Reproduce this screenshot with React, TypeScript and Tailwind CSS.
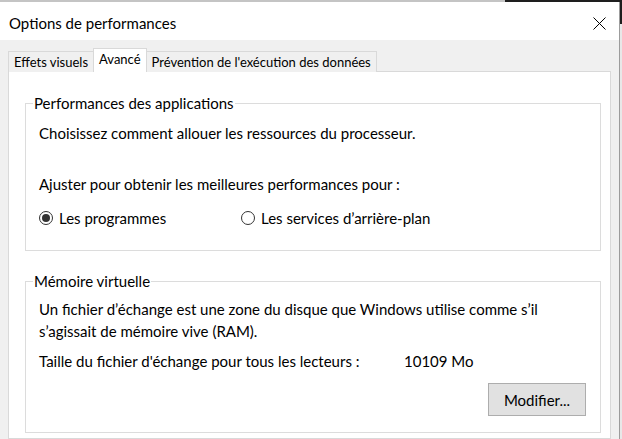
import { useState } from "react"

function Radio({ checked, label, onClick }: { checked: boolean; label: string; onClick: () => void }) {
  return (
    <button type="button" onClick={onClick} className="flex items-center gap-[6px] text-left">
      <span className="w-[14px] h-[14px] rounded-full border border-[#333333] bg-white flex items-center justify-center">
        {checked && <span className="w-[8px] h-[8px] rounded-full bg-[#333333]" />}
      </span>
      <span>{label}</span>
    </button>
  )
}

export default function App() {
  const [mode, setMode] = useState<"prog" | "bg">("prog")
  const tabs = ["Effets visuels", "Avancé", "Prévention de l'exécution des données"]

  return (
    <div className="w-[622px] h-[439px] overflow-hidden flex flex-col bg-[#e6e6e6] text-black font-['Lato',sans-serif]">
      {/* background strip behind window */}
      <div className="h-[2px] flex shrink-0">
        <div className="w-[505px] bg-[#c4c4c4]" />
        <div className="flex-1 bg-[#1e1e1e]" />
      </div>

      <div className="flex flex-1 min-h-0">
        <div className="w-[620px] flex flex-col border-r border-[#9c9c9c] bg-[#f0f0f0]">
          {/* Title bar */}
          <div className="h-[38px] shrink-0 bg-white flex items-center justify-between pl-[9px] pr-[13px]">
            <span className="text-[15px] leading-[20px] pt-[3px]">Options de performances</span>
            <svg width="13" height="13" viewBox="0 0 13 13" className="mt-[5px]">
              <path d="M0.5 0.5 L12.5 12.5 M12.5 0.5 L0.5 12.5" stroke="#000" strokeWidth="1" fill="none" />
            </svg>
          </div>

          {/* Body */}
          <div className="flex-1 pt-[8px] pl-[8px] flex flex-col min-h-0">
            <div className="flex items-end h-[24px] text-[13px] relative z-10 -mb-px">
              {tabs.map((t, i) =>
                i === 1 ? (
                  <div key={t} className="h-[24px] px-[5px] bg-white border border-b-0 border-[#d9d9d9] flex items-start pt-[1px] leading-[18px]">
                    {t}
                  </div>
                ) : (
                  <div key={t} className="h-[21px] px-[5px] bg-[#f0f0f0] border border-b-0 border-[#d9d9d9] flex items-center leading-[18px] -mx-px first:ml-0">
                    {t}
                  </div>
                )
              )}
            </div>

            <div className="w-[603px] flex-1 bg-white border border-[#d9d9d9] pl-[16px] pt-[21px] text-[15px] leading-[20px]">
              <fieldset className="w-[576px] border border-[#dcdcdc]">
                <legend className="ml-[7px] px-[1px]">Performances des applications</legend>
                <div className="pl-[13px] pb-[22px]">
                  <p className="mt-[10px]">Choisissez comment allouer les ressources du processeur.</p>
                  <p className="mt-[31px]">Ajuster pour obtenir les meilleures performances pour :</p>
                  <div className="mt-[14px] flex">
                    <div className="w-[202px]">
                      <Radio checked={mode === "prog"} label="Les programmes" onClick={() => setMode("prog")} />
                    </div>
                    <Radio checked={mode === "bg"} label="Les services d’arrière-plan" onClick={() => setMode("bg")} />
                  </div>
                </div>
              </fieldset>

              <fieldset className="w-[576px] mt-[20px] border border-[#dcdcdc]">
                <legend className="ml-[7px] px-[1px]">Mémoire virtuelle</legend>
                <div className="pl-[13px] pr-[14px] pb-[16px]">
                  <p className="mt-[7px] leading-[22px]">
                    Un fichier d’échange est une zone du disque que Windows utilise comme s’il
                    <br />
                    s’agissait de mémoire vive (RAM).
                  </p>
                  <div className="mt-[9px] flex">
                    <span className="w-[365px]">Taille du fichier d'échange pour tous les lecteurs :</span>
                    <span>10109 Mo</span>
                  </div>
                  <div className="mt-[12px] flex justify-end">
                    <button type="button" className="w-[98px] h-[33px] bg-[#e1e1e1] border border-[#adadad] text-[15px]">
                      Modifier...
                    </button>
                  </div>
                </div>
              </fieldset>
            </div>
          </div>
        </div>

        <div className="flex-1 flex flex-col">
          <div className="h-[22px] bg-[#1e1e1e]" />
          <div className="flex-1 bg-[#e8e8e8]" />
        </div>
      </div>
    </div>
  )
}
